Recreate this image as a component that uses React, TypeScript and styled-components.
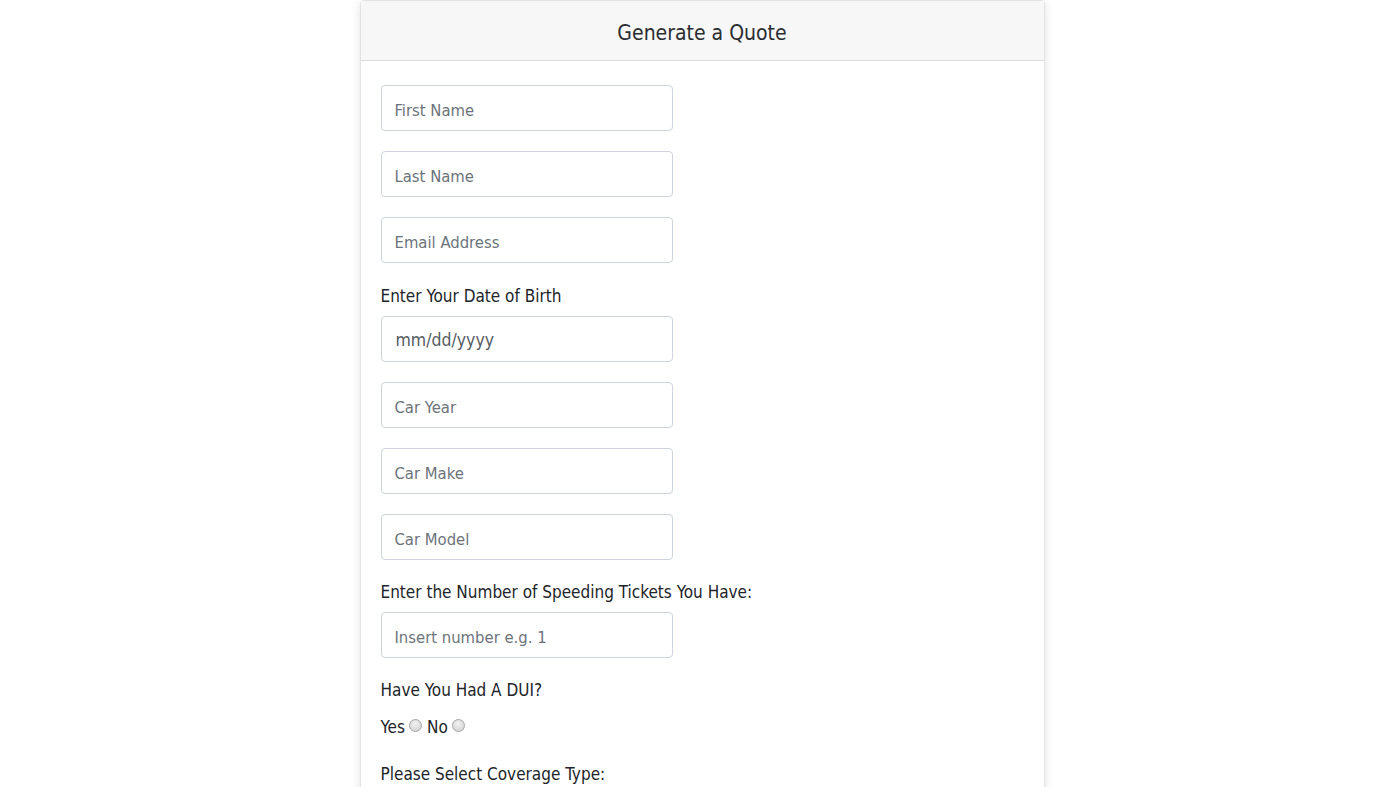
import React from "react";
import styled, { createGlobalStyle } from "styled-components";

const Global = createGlobalStyle`
  html, body { margin: 0; padding: 0; background: #fff; }
  body { font-family: "DejaVu Sans Condensed", "Liberation Sans", sans-serif; color: #212529; }
`;

const Page = styled.div`
  display: flex;
  justify-content: center;
  padding-left: 4px;
  height: 787px;
  overflow: hidden;
`;

const Card = styled.div`
  width: 683px;
  border: 1px solid #e3e3e3;
  border-radius: 4px;
  background: #fff;
  box-shadow: 0 2px 10px rgba(0, 0, 0, 0.12);
  align-self: flex-start;
`;

const Header = styled.div`
  box-sizing: border-box;
  height: 60px;
  padding-top: 4px;
  background: #f7f7f7;
  border-bottom: 1px solid #dcdcdc;
  display: flex;
  align-items: center;
  justify-content: center;
  font-size: 21px;
  color: #2a2d31;
`;

const Body = styled.div`
  padding: 24px 20px;
  display: flex;
  flex-direction: column;
  align-items: flex-start;
`;

const Input = styled.input<{ $mb?: number }>`
  box-sizing: border-box;
  width: 292px;
  height: 46px;
  border: 1px solid #ced4da;
  border-radius: 4px;
  padding: 4px 13px 0;
  font-family: inherit;
  font-size: 16.5px;
  color: #495057;
  margin-bottom: ${(p) => p.$mb ?? 20}px;
  &::placeholder { color: #6c737a; }
`;

const DateBox = styled.div`
  box-sizing: border-box;
  width: 292px;
  height: 46px;
  border: 1px solid #ced4da;
  border-radius: 4px;
  padding: 2px 14px 0;
  display: flex;
  align-items: center;
  font-size: 17.5px;
  color: #555b62;
  margin-bottom: 20px;
`;

const Label = styled.div<{ $mb?: number }>`
  font-size: 17px;
  color: #212529;
  margin-bottom: ${(p) => p.$mb ?? 8}px;
  line-height: 24px;
`;

const RadioRow = styled.div`
  display: flex;
  align-items: center;
  font-size: 17px;
  line-height: 24px;
  margin-bottom: 23px;
  padding-top: 1px;
`;

const Radio = styled.span`
  display: inline-block;
  width: 13px;
  height: 13px;
  border-radius: 50%;
  border: 1px solid #a4a4a4;
  background: radial-gradient(circle at 45% 35%, #f2f2f2, #cdcdcd);
  margin: 0 5px 4px 4px;
  box-sizing: border-box;
`;

export default function App() {
  return (
    <>
      <Global />
      <Page>
        <Card>
          <Header>Generate a Quote</Header>
          <Body>
            <Input placeholder="First Name" />
            <Input placeholder="Last Name" />
            <Input placeholder="Email Address" $mb={21} />
            <Label>Enter Your Date of Birth</Label>
            <DateBox>mm/dd/yyyy</DateBox>
            <Input placeholder="Car Year" />
            <Input placeholder="Car Make" />
            <Input placeholder="Car Model" $mb={20} />
            <Label>Enter the Number of Speeding Tickets You Have:</Label>
            <Input placeholder="Insert number e.g. 1" $mb={20} />
            <Label $mb={12}>Have You Had A DUI?</Label>
            <RadioRow>
              Yes<Radio /> No<Radio />
            </RadioRow>
            <Label>Please Select Coverage Type:</Label>
          </Body>
        </Card>
      </Page>
    </>
  );
}
